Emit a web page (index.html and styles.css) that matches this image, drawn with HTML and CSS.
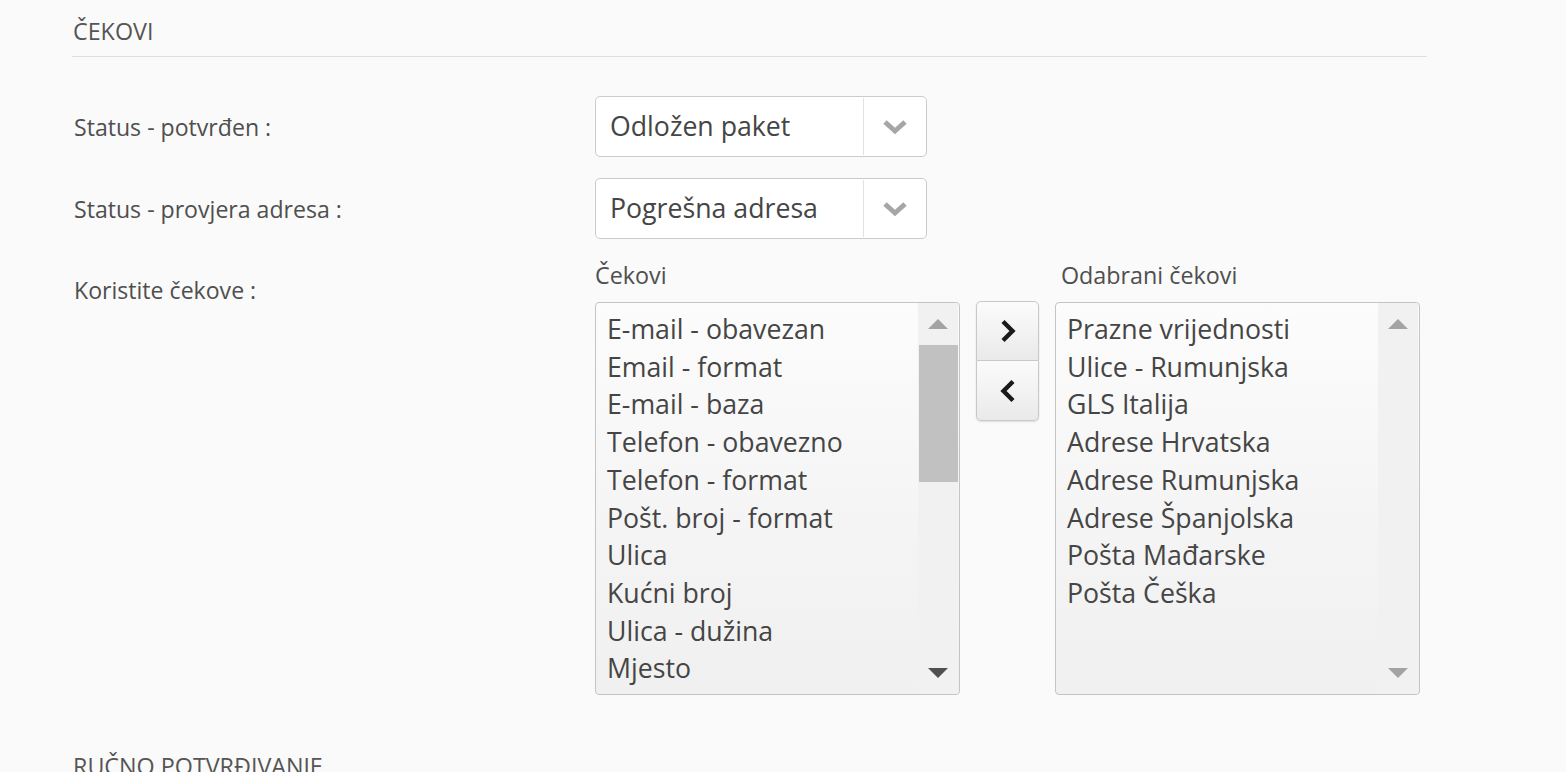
FILE: index.html
```html
<!DOCTYPE html>
<html lang="hr">
<head>
<meta charset="utf-8">
<title>Čekovi</title>
<link rel="stylesheet" href="styles.css">
</head>
<body>
<div class="page">
  <section class="section">
    <h2 class="section-title">ČEKOVI</h2>
    <div class="form">
      <div class="form-row">
        <label class="form-label">Status - potvrđen :</label>
        <div class="select">
          <span class="select-value">Odložen paket</span>
          <span class="select-arrow">
            <svg width="26" height="16" viewBox="0 0 26 16"><polyline points="3,3 13,12 23,3" fill="none" stroke="#a6a6a6" stroke-width="5"/></svg>
          </span>
        </div>
      </div>
      <div class="form-row">
        <label class="form-label">Status - provjera adresa :</label>
        <div class="select">
          <span class="select-value">Pogrešna adresa</span>
          <span class="select-arrow">
            <svg width="26" height="16" viewBox="0 0 26 16"><polyline points="3,3 13,12 23,3" fill="none" stroke="#a6a6a6" stroke-width="5"/></svg>
          </span>
        </div>
      </div>
      <div class="form-row form-row-top">
        <label class="form-label form-label-offset">Koristite čekove :</label>
        <div class="picklist">
          <div class="pick-col">
            <div class="pick-caption">Čekovi</div>
            <div class="listbox">
              <ul class="list-items">
                <li>E-mail - obavezan</li>
                <li>Email - format</li>
                <li>E-mail - baza</li>
                <li>Telefon - obavezno</li>
                <li>Telefon - format</li>
                <li>Pošt. broj - format</li>
                <li>Ulica</li>
                <li>Kućni broj</li>
                <li>Ulica - dužina</li>
                <li>Mjesto</li>
                <li>Poštanski broj</li>
                <li>Država</li>
              </ul>
              <div class="scrollbar">
                <div class="sb-btn"><span class="tri-up"></span></div>
                <div class="sb-track"><div class="sb-thumb"></div></div>
                <div class="sb-btn"><span class="tri-down dark"></span></div>
              </div>
            </div>
          </div>
          <div class="pick-buttons">
            <button class="pick-btn pick-btn-top" type="button">
              <svg width="20" height="26" viewBox="0 0 20 26"><polyline points="5,3.5 14.5,13 5,22.5" fill="none" stroke="#1a1a1a" stroke-width="4.4"/></svg>
            </button>
            <button class="pick-btn pick-btn-bottom" type="button">
              <svg width="20" height="26" viewBox="0 0 20 26"><polyline points="15,3.5 5.5,13 15,22.5" fill="none" stroke="#1a1a1a" stroke-width="4.4"/></svg>
            </button>
          </div>
          <div class="pick-col">
            <div class="pick-caption pick-caption-right">Odabrani čekovi</div>
            <div class="listbox">
              <ul class="list-items">
                <li>Prazne vrijednosti</li>
                <li>Ulice - Rumunjska</li>
                <li>GLS Italija</li>
                <li>Adrese Hrvatska</li>
                <li>Adrese Rumunjska</li>
                <li>Adrese Španjolska</li>
                <li>Pošta Mađarske</li>
                <li>Pošta Češka</li>
              </ul>
              <div class="scrollbar">
                <div class="sb-btn"><span class="tri-up"></span></div>
                <div class="sb-track"></div>
                <div class="sb-btn"><span class="tri-down"></span></div>
              </div>
            </div>
          </div>
        </div>
      </div>
    </div>
  </section>
  <section class="section section-next">
    <h2 class="section-title">RUČNO POTVRĐIVANJE</h2>
  </section>
</div>
</body>
</html>
```

FILE: styles.css
```css
html, body {
  margin: 0;
  padding: 0;
  background: #fafafa;
  overflow: hidden;
}
body {
  font-family: "Open Sans", "Noto Sans", "Liberation Sans", sans-serif;
  color: #4a4a4a;
}
.page {
  padding-left: 72px;
  width: 1355px;
}
.section-title {
  margin: 0;
  padding-top: 16px;
  padding-bottom: 10px;
  padding-left: 1px;
  font-size: 23.3px;
  line-height: 30px;
  font-weight: 400;
  color: #555;
  border-bottom: 1px solid #dedede;
}
.section-next {
  margin-top: 40px;
}
.section-next .section-title {
  border-bottom: none;
}
.form {
  padding-top: 39px;
  display: flex;
  flex-direction: column;
  gap: 21px;
}
.form-row {
  display: flex;
  align-items: center;
}
.form-row-top {
  align-items: flex-start;
}
.form-label {
  width: 521px;
  padding-left: 2px;
  font-size: 23.1px;
  line-height: 30px;
  color: #4f4f4f;
}
.form-label-offset {
  margin-top: 15px;
}
.select {
  width: 330px;
  height: 59px;
  border: 1px solid #cbcbcb;
  border-radius: 5px;
  background: #fff;
  display: flex;
  align-items: center;
}
.select-value {
  flex: 1;
  padding-left: 14px;
  font-size: 26.7px;
  line-height: 36px;
  color: #454545;
  margin-top: -2px;
}
.select-arrow {
  width: 62px;
  height: 57px;
  border-left: 1px solid #e2e2e2;
  display: flex;
  align-items: center;
  justify-content: center;
}
.picklist {
  display: flex;
  align-items: flex-start;
}
.pick-col {
  display: flex;
  flex-direction: column;
}
.pick-caption {
  font-size: 23.3px;
  line-height: 30px;
  color: #4f4f4f;
  margin-bottom: 12px;
  padding-left: 0;
}
.pick-caption-right {
  padding-left: 6px;
}
.listbox {
  width: 363px;
  height: 391px;
  border: 1px solid #c4c4c4;
  border-radius: 4px;
  background: linear-gradient(to bottom, #fcfcfc 0%, #f4f4f4 60%, #f0f0f0 100%);
  display: flex;
  overflow: hidden;
}
.list-items {
  list-style: none;
  margin: 0;
  padding: 7px 0 0 11px;
  flex: 1;
  overflow: hidden;
  font-size: 26.7px;
  line-height: 37.7px;
  color: #454545;
}
.list-items li {
  white-space: nowrap;
}
.scrollbar {
  width: 40px;
  margin-right: 1px;
  background: #f1f1f1;
  display: flex;
  flex-direction: column;
}
.sb-btn {
  height: 42px;
  display: flex;
  align-items: center;
  justify-content: center;
}
.sb-track {
  flex: 1;
}
.sb-thumb {
  height: 137px;
  margin: 0 0 0 1px;
  background: #c1c1c1;
}
.tri-up {
  width: 0;
  height: 0;
  border-left: 10px solid transparent;
  border-right: 10px solid transparent;
  border-bottom: 10px solid #a3a3a3;
}
.tri-down {
  width: 0;
  height: 0;
  border-left: 10px solid transparent;
  border-right: 10px solid transparent;
  border-top: 10px solid #a3a3a3;
}
.tri-down.dark {
  border-top-color: #505050;
}
.pick-buttons {
  margin: 41px 16px 0 16px;
  display: flex;
  flex-direction: column;
  box-shadow: 0 1px 2px rgba(0, 0, 0, 0.12);
  border-radius: 5px;
}
.pick-btn {
  width: 63px;
  height: 60px;
  padding: 0;
  border: 1px solid #c8c8c8;
  background: linear-gradient(to bottom, #fbfbfb 0%, #f1f1f1 60%, #e9e9e9 100%);
  display: flex;
  align-items: center;
  justify-content: center;
  cursor: pointer;
}
.pick-btn-top {
  border-radius: 5px 5px 0 0;
}
.pick-btn-bottom {
  border-top: none;
  border-radius: 0 0 5px 5px;
}
```
